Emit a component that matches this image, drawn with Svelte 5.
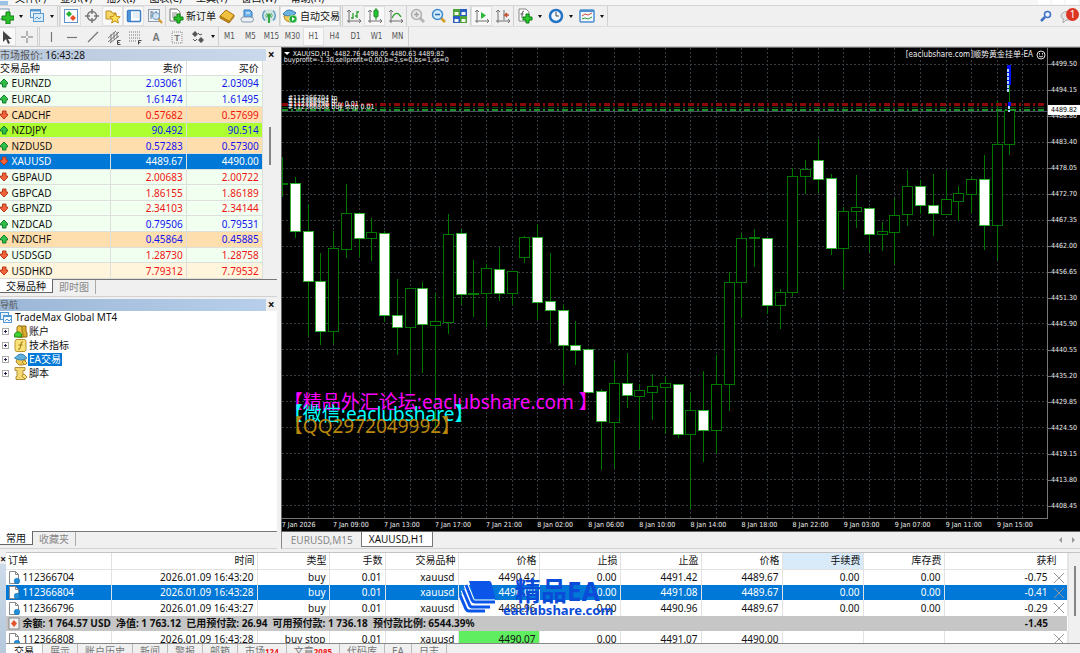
<script>
    // Inner markup of the 16x16 toolbar icons
    const icons = {
        newChart: `<rect x="1" y="1" width="10" height="10" fill="#fff" stroke="#7a94ad"/><path d="M8 4h4v4h4v4h-4v4H8v-4H4V8h4z" fill="#2cc22c" stroke="#0b7d12"/>`,
        profiles: `<rect x="1.500" y="1.500" width="10" height="8" fill="#e8f3fc" stroke="#5b9bd0"/><path d="M1 2.500h11" stroke="#5b9bd0" stroke-width="2"/><rect x="4.500" y="5.500" width="10" height="8" fill="#d7eafa" stroke="#5b9bd0"/><path d="M6 11l2-2 2 2 2-2" fill="none" stroke="#5b9bd0"/>`,
        market: `<rect x="1.500" y="1.500" width="13" height="13" fill="#fff" stroke="#5d93c8"/><path d="M6 3l3 3-3 3-3-3z" fill="#25b032"/><path d="M10 7l3 3-3 3-3-3z" fill="#e5532c"/>`,
        target: `<circle cx="8" cy="8" r="4.500" fill="none" stroke="#777" stroke-width="1.500"/><path d="M8 1v5M8 10v5M1 8h5M10 8h5" stroke="#777" stroke-width="1.500"/>`,
        navigator: `<path d="M1 3h5l1 2h4v6H1z" fill="#f5d667" stroke="#b9902a"/><path d="M10 5l1.600 3.400 3.600.4-2.700 2.500.8 3.700L10 13l-3.300 2 .8-3.700L4.800 8.800l3.600-.4z" fill="#ffdf57" stroke="#c28d16"/>`,
        terminal: `<rect x="1.500" y="2.500" width="13" height="11" rx="1" fill="#fff" stroke="#3d7ec2" stroke-width="1.500"/><rect x="2" y="3" width="3" height="10" fill="#4d93da"/><path d="M7 5h6M7 7h6M7 9h6" stroke="#ccdcec"/>`,
        tester: `<rect x="1.500" y="1.500" width="11" height="12" fill="#eef4fa" stroke="#8c9cae"/><path d="M4 3v8M4 4h2v4H4M9 3v6" stroke="#6b7f93" fill="none"/><circle cx="9" cy="8" r="3.500" fill="#cfe6f8" fill-opacity=".8" stroke="#6895bf"/><path d="M11.500 11l3.500 4" stroke="#d09a2c" stroke-width="2"/>`,
        order: `<path d="M2 1h7l3 3v9H2z" fill="#fff" stroke="#777"/><path d="M4 5h5M4 7h6M4 9h4" stroke="#888"/><path d="M9 6h3v3h3v3h-3v3H9v-3H6V9h3z" fill="#2cc22c" stroke="#0b7d12"/>`,
        book: `<path d="M1 8l6-6 8 5-5 7z" fill="#efc13e" stroke="#a87415"/><path d="M1 8v2l9 5v-2zM10 15l5-6V7" fill="#c98e1e" stroke="#a87415"/>`,
        mql: `<path d="M4 2h6l2 2v5H4z" fill="#6fb4ec" stroke="#2f78ba"/><path d="M3 9h8a2.500 2.500 0 010 5H4a2.500 2.500 0 01-1-5z" fill="#e9eef3" stroke="#8a9bac"/><path d="M6 5h4" stroke="#fff"/>`,
        signal: `<circle cx="8" cy="7.500" r="6.500" fill="#d3e6dd"/><path d="M4 2.500a6.500 6.500 0 000 10M12 2.500a6.500 6.500 0 010 10" fill="none" stroke="#5a9cc6" stroke-width="1.500"/><path d="M6 5a3.500 3.500 0 000 5M10 5a3.500 3.500 0 010 5" fill="none" stroke="#5db08e"/><circle cx="8" cy="7.500" r="2" fill="#35a545"/><path d="M8 8v7" stroke="#35a545" stroke-width="2"/>`,
        auto: `<path d="M2 8c0 7 10 8 12 2l-2-4H3z" fill="#f0cb50" stroke="#a8822a"/><path d="M1 6c1-1 3-4 6-4s6 2 7 3c-2 3-11 4-13 1z" fill="#6bb3e1" stroke="#3b7fae"/><circle cx="11" cy="11" r="4" fill="#22ac38" stroke="#fff" stroke-width=".5"/><path d="M10 9l3 2-3 2z" fill="#fff"/>`,
        bars: `<path d="M3 2v13M1 13h14M1 4l2-2 2 2M13 11l2 2-2 2" fill="none" stroke="#707070"/><path d="M7 5v6M7 10H5M11 3v7M11 4h2M11 8H9" stroke="#2aa12a" stroke-width="1.300"/>`,
        candles: `<path d="M3 2v13M1 13h14M1 4l2-2 2 2M13 11l2 2-2 2" fill="none" stroke="#707070"/><path d="M9 0v12" stroke="#138a1b"/><rect x="7" y="2" width="4" height="7" rx="1" fill="#25c435" stroke="#138a1b"/>`,
        line: `<path d="M3 2v13M1 13h14M1 4l2-2 2 2M13 11l2 2-2 2" fill="none" stroke="#707070"/><path d="M4 10c3-6 6-6 9-1" fill="none" stroke="#2aa12a" stroke-width="1.300"/>`,
        zoomIn: `<path d="M10 10l4 4" stroke="#b5b5b5" stroke-width="3"/><circle cx="6.500" cy="6.500" r="5" fill="#e8e8e8" stroke="#b0b0b0" stroke-width="1.500"/><path d="M4 6.500h5M6.500 4v5" stroke="#a5a5a5" stroke-width="1.500"/>`,
        zoomOut: `<path d="M10 10l4 4" stroke="#d6a02e" stroke-width="3"/><circle cx="6.500" cy="6.500" r="5" fill="#d4ecfd" stroke="#3f8bd0" stroke-width="1.500"/><path d="M4 6.500h5" stroke="#2a6bb0" stroke-width="1.500"/>`,
        tile: `<rect x="1" y="1" width="7" height="7" fill="#4da339"/><rect x="8" y="1" width="7" height="7" fill="#2b5bc5"/><rect x="1" y="8" width="7" height="7" fill="#2b5bc5"/><rect x="8" y="8" width="7" height="7" fill="#4da339"/><path d="M2.500 4h4v3h-4zM9.500 4h4v3h-4zM2.500 11h4v3h-4zM9.500 11h4v3h-4z" fill="#f4f8ee"/>`,
        scroll: `<path d="M3 2v13M1 13h14M1 4l2-2 2 2M13 11l2 2-2 2" fill="none" stroke="#707070"/><path d="M7 4l5 3.500L7 11z" fill="#2bb83a"/>`,
        shift: `<path d="M3 2v13M1 13h14M1 4l2-2 2 2M13 11l2 2-2 2M9 2v10" fill="none" stroke="#707070"/><path d="M14 7h-4l2-2m-2 2l2 2" fill="none" stroke="#c3502e" stroke-width="1.500"/>`,
        indicators: `<path d="M2 1h7l3 3v9H2z" fill="#fff" stroke="#888"/><path d="M7 3q-2 0-2 3v4M3.500 6h3" fill="none" stroke="#555"/><path d="M9 6h3v3h3v3h-3v3H9v-3H6V9h3z" fill="#2ccb2c" stroke="#0b7d12"/>`,
        clock: `<circle cx="8" cy="8" r="6" fill="#f4f9ff" stroke="#2574c4" stroke-width="2.500"/><path d="M8 4v4h3" fill="none" stroke="#444"/>`,
        template: `<rect x="1" y="2" width="14" height="12" rx="1" fill="#f4f8fc" stroke="#4c8fcf" stroke-width="1.500"/><path d="M1 3h14" stroke="#4c8fcf" stroke-width="2"/><path d="M3 8l3-2 3 1 4-2" fill="none" stroke="#c84f3a"/><path d="M3 11l3-1 3 1 4-2" fill="none" stroke="#2f9a35"/>`,
        cursor: `<path d="M5 2v11l3-3 2 5 2-1-2-4h4z" fill="#444"/>`,
        cross: `<path d="M8 2v5M8 9v5M2 8h5M9 8h5" stroke="#777"/>`,
        vline: `<path d="M8.500 3v10" stroke="#777" stroke-width="1.200"/>`,
        hline: `<path d="M3 8.500h10" stroke="#777" stroke-width="1.200"/>`,
        trend: `<path d="M3 13L13 3" stroke="#777" stroke-width="1.200"/>`,
        channel: `<path d="M2 9l8-7M2 13L13 3M4 14l9-7M5 5v8M8 3v7M11 3v6" stroke="#777"/><path d="M14.500 11.500h-3v4h3M11.500 13.500h2" fill="none" stroke="#444"/>`,
        fibo: `<path d="M2 3h12M2 6h12M2 9h12M2 12h8" stroke="#777" stroke-dasharray="1 1"/><path d="M14.500 11.500h-3v4M11.500 13.500h2" fill="none" stroke="#444"/>`,
        text: `<text x="8" y="12" font-size="10" font-weight="bold" text-anchor="middle" fill="#777" font-family="Liberation Sans, sans-serif">A</text>`,
        label: `<rect x="3" y="3" width="10" height="11" fill="none" stroke="#888" stroke-dasharray="1 1"/><text x="8" y="12" font-size="9" font-weight="bold" text-anchor="middle" fill="#777" font-family="Liberation Sans, sans-serif">T</text>`,
        arrows: `<path d="M5 2l3 3-3 3-3-3zM11 8l3 3-3 3-3-3z" fill="#555"/><path d="M3 10l2 2 2-2M8 4l2 2 2-1" fill="none" stroke="#555"/>`,
    };

    const menus = ["文件(F)", "显示(V)", "插入(I)", "图表(C)", "工具(T)", "窗口(W)", "帮助(H)"];

    const mainTools = [
        { icon: "newChart", label: "新图表", drop: true },
        { icon: "profiles", label: "配置文件", drop: true },
        { grip: true },
        { icon: "market", label: "市场报价", on: true },
        { icon: "target", label: "数据窗口" },
        { icon: "navigator", label: "导航", on: true },
        { icon: "terminal", label: "终端", on: true },
        { icon: "tester", label: "策略测试" },
        { line: true },
        { icon: "order", text: "新订单" },
        { icon: "book", label: "MetaEditor" },
        { icon: "mql", label: "MQL" },
        { icon: "signal", label: "信号" },
        { line: true },
        { icon: "auto", text: "自动交易", on: true },
        { grip: true },
        { icon: "bars", label: "柱状图" },
        { icon: "candles", label: "阴阳烛", on: true },
        { icon: "line", label: "折线图" },
        { line: true },
        { icon: "zoomIn", label: "放大" },
        { icon: "zoomOut", label: "缩小" },
        { icon: "tile", label: "平铺窗口" },
        { line: true },
        { icon: "scroll", label: "自动滚动", on: true },
        { icon: "shift", label: "图表平移" },
        { line: true },
        { icon: "indicators", label: "技术指标", drop: true },
        { icon: "clock", label: "时间周期", drop: true },
        { icon: "template", label: "模板", drop: true },
        { line: true },
    ];

    const drawTools = [
        { icon: "cursor", label: "光标", on: true },
        { icon: "cross", label: "十字准线" },
        { grip: true },
        { icon: "vline", label: "垂直线" },
        { icon: "hline", label: "水平线" },
        { icon: "trend", label: "趋势线" },
        { icon: "channel", label: "通道" },
        { icon: "fibo", label: "斐波那契" },
        { icon: "text", label: "文字" },
        { icon: "label", label: "文字标签" },
        { icon: "arrows", label: "箭头", drop: true },
        { line: true },
    ];

    const periods = ["M1", "M5", "M15", "M30", "H1", "H4", "D1", "W1", "MN"];
    let period = "H1";

    const quotes = [
        ["EURNZD", "2.03061", "2.03094", "up", "mint"],
        ["EURCAD", "1.61474", "1.61495", "up", "mint"],
        ["CADCHF", "0.57682", "0.57699", "down", "sand"],
        ["NZDJPY", "90.492", "90.514", "up", "lime"],
        ["NZDUSD", "0.57283", "0.57300", "up", "sand"],
        ["XAUUSD", "4489.67", "4490.00", "down", "selected"],
        ["GBPAUD", "2.00683", "2.00722", "down", "mint"],
        ["GBPCAD", "1.86155", "1.86189", "down", "mint"],
        ["GBPNZD", "2.34103", "2.34144", "down", "mint"],
        ["NZDCAD", "0.79506", "0.79531", "up", "mint"],
        ["NZDCHF", "0.45864", "0.45885", "up", "sand"],
        ["USDSGD", "1.28730", "1.28758", "down", "mint"],
        ["USDHKD", "7.79312", "7.79532", "down", "cream"],
    ];

    const tree = [
        { text: "账户", icon: "account" },
        { text: "技术指标", icon: "indicator" },
        { text: "EA交易", icon: "expert", selected: true },
        { text: "脚本", icon: "script" },
    ];

    // high, body top, body bottom, low, bearish
    const candles = [
        [109, 136, 136, 149, 0], [129, 136, 184, 190, 1], [156, 184, 234, 288, 1], [205, 234, 284, 297, 1],
        [183, 201, 284, 296, 0], [136, 166, 202, 210, 0], [165, 166, 191, 209, 1], [170, 185, 191, 213, 0],
        [183, 186, 268, 274, 1], [231, 268, 280, 307, 1], [240, 241, 280, 346, 0], [234, 241, 277, 325, 1],
        [245, 274, 278, 384, 0], [166, 187, 275, 286, 0], [181, 186, 247, 257, 1], [212, 246, 246, 269, 0],
        [216, 221, 246, 279, 0], [199, 222, 246, 253, 1], [224, 224, 246, 257, 0], [188, 190, 210, 215, 0],
        [176, 190, 255, 272, 1], [205, 254, 263, 295, 1], [257, 263, 298, 336, 1], [273, 298, 303, 317, 1],
        [302, 302, 345, 345, 1], [341, 344, 374, 422, 1], [314, 336, 375, 420, 0], [305, 336, 348, 360, 1],
        [336, 343, 349, 401, 0], [326, 339, 345, 372, 0], [328, 336, 340, 386, 0], [337, 337, 387, 390, 1],
        [345, 363, 387, 461, 0], [323, 363, 383, 414, 1], [307, 337, 383, 406, 0], [224, 235, 337, 363, 0],
        [185, 191, 235, 270, 0], [181, 190, 190, 219, 0], [191, 191, 258, 266, 1], [241, 245, 258, 281, 0],
        [120, 129, 245, 248, 0], [112, 122, 129, 146, 0], [91, 113, 132, 145, 1], [126, 131, 201, 207, 1],
        [159, 164, 201, 241, 0], [127, 160, 164, 180, 0], [159, 161, 187, 204, 1], [174, 184, 187, 203, 0],
        [150, 168, 185, 216, 0], [122, 139, 167, 178, 0], [132, 139, 158, 166, 1], [126, 158, 166, 188, 1],
        [122, 152, 167, 167, 0], [138, 146, 154, 173, 0], [129, 132, 147, 165, 0], [107, 132, 178, 202, 1],
        [53, 97, 178, 212, 0], [18, 63, 97, 107, 0],
    ];
    const candleX = (i) => Math.round(i * 12.76);
    const gridX = Array.from({ length: 30 }, (_, i) => Math.round(25.52 * (i + 1)));
    const gridY = Array.from({ length: 18 }, (_, i) => Math.round(16 + 25.94 * i));

    const prices = [
        "4499.50", "4494.15", "4488.80", "4483.40", "4478.05", "4472.70", "4467.35", "4462.00", "4456.65",
        "4451.30", "4445.90", "4440.55", "4435.20", "4429.85", "4424.50", "4419.15", "4413.80", "4408.45",
    ];
    const times = [
        "7 Jan 2026", "7 Jan 09:00", "7 Jan 13:00", "7 Jan 17:00", "7 Jan 21:00", "8 Jan 02:00", "8 Jan 06:00",
        "8 Jan 10:00", "8 Jan 14:00", "8 Jan 18:00", "8 Jan 22:00", "9 Jan 03:00", "9 Jan 07:00", "9 Jan 11:00", "9 Jan 15:00",
    ];

    const columns = [
        ["订单", 105], ["时间", 146], ["类型", 72], ["手数", 56], ["交易品种", 73], ["价格", 81],
        ["止损", 81], ["止盈", 81], ["价格", 81], ["手续费", 81], ["库存费", 81], ["获利", 123],
    ];
    const orders = [
        ["112366704", "2026.01.09 16:43:20", "buy", "0.01", "xauusd", "4490.42", "0.00", "4491.42", "4489.67", "0.00", "0.00", "-0.75"],
        ["112366804", "2026.01.09 16:43:28", "buy", "0.01", "xauusd", "4490.08", "0.00", "4491.08", "4489.67", "0.00", "0.00", "-0.41"],
        ["112366796", "2026.01.09 16:43:27", "buy", "0.01", "xauusd", "4489.96", "0.00", "4490.96", "4489.67", "0.00", "0.00", "-0.29"],
    ];
    const pending = ["112366808", "2026.01.09 16:43:28", "buy stop", "0.01", "xauusd", "4490.07", "0.00", "4491.07", "4490.00", "", "", ""];
    let selectedOrder = "112366804";

    const terminalTabs = [
        ["交易"], ["展示"], ["账户历史"], ["新闻"], ["警报"], ["邮箱"], ["市场", "124"], ["文章", "2085"], ["代码库"], ["EA"], ["日志"],
    ];
</script>

{#snippet toolList(tools)}
    {#each tools as tool}
        {#if tool.grip}
            <span class="grip"></span>
        {:else if tool.line}
            <span class="divider"></span>
        {:else}
            <button class="tool" class:on={tool.on} class:wide={tool.text} aria-label={tool.text || tool.label}>
                <svg width="16" height="16" viewBox="0 0 16 16">{@html icons[tool.icon]}</svg>
                {#if tool.text}<span>{tool.text}</span>{/if}
            </button>
            {#if tool.drop}
                <button class="drop" aria-label="{tool.label}菜单"></button>
            {/if}
        {/if}
    {/each}
{/snippet}

{#snippet orderRow(cells, isPending)}
    <tr class:selected={cells[0] === selectedOrder} on:click={() => (selectedOrder = cells[0])}>
        {#each cells as cell, i}
            <td class:pending={isPending && i === 5} class:last={i === 11}>
                {#if i === 0}
                    <svg width="12" height="13" viewBox="0 0 12 13">
                        <path d="M1.500 .5h6l3 3v9h-9z" fill="#fff" stroke="#888" />
                        <path d="M7.500 .5v3h3" fill="none" stroke="#888" />
                        <circle cx="9" cy="10" r="2.800" fill="#1f8fdc" stroke="#0f65a5" stroke-width=".5" />
                    </svg>
                {/if}
                {cell}
                {#if i === 11}
                    <button class="close-order" aria-label="平仓">
                        <svg width="12" height="12" viewBox="0 0 12 12"><path d="M1 1l10 10M11 1L1 11" stroke="#999" /></svg>
                    </button>
                {/if}
            </td>
        {/each}
    </tr>
{/snippet}

<div class="terminal-app">
    <nav class="menubar">
        <span class="app-icon"></span>
        {#each menus as menu}
            <button>{menu}</button>
        {/each}
        <span class="spacer"></span>
        <i></i><i></i><i></i>
    </nav>

    <div class="toolbar main-tools">
        {@render toolList(mainTools)}
        <span class="spacer"></span>
        <button class="search" aria-label="搜索">
            <svg width="12" height="12" viewBox="0 0 12 12">
                <path d="M1 11l4-4" stroke="#3d6fc4" stroke-width="2.500" />
                <circle cx="7.500" cy="4.500" r="3" fill="#edf4ff" stroke="#3d6fc4" stroke-width="1.500" />
            </svg>
        </button>
        <button class="chat" aria-label="消息">
            <svg width="16" height="16" viewBox="0 0 16 16">
                <path d="M1 8a6 4.500 0 1112 0 6 4.500 0 01-7 4l-3 3 .5-4Q1 10 1 8z" fill="#e3e3e3" stroke="#aaa" />
            </svg>
            <b>1</b>
        </button>
    </div>

    <div class="toolbar draw-tools">
        {@render toolList(drawTools)}
        {#each periods as p}
            <button class="tool period" class:on={p === period} on:click={() => (period = p)}>{p}</button>
        {/each}
        <span class="divider"></span>
    </div>

    <div class="workspace">
        <aside>
            <section class="market">
                <header>
                    <h2>市场报价: <span>16:43:28</span></h2>
                    <button aria-label="关闭市场报价">×</button>
                </header>
                <div class="quotes">
                    <table>
                        <thead>
                            <tr><th>交易品种</th><th>卖价</th><th>买价</th></tr>
                        </thead>
                        <tbody>
                            {#each quotes as [symbol, bid, ask, dir, tone]}
                                <tr class="{tone} {dir}">
                                    <td>
                                        <svg width="9" height="10" viewBox="0 0 9 10">
                                            {#if dir === "up"}
                                                <path d="M4 1l3.500 3.500v1.500H6v3H2.500V6H.5V4.500z" fill="#2fc04a" stroke="#147a2b" />
                                            {:else}
                                                <path d="M4 9l3.500-3.500V4H6V1H2.500v3H.5v1.500z" fill="#f0643c" stroke="#b5361a" />
                                            {/if}
                                        </svg>
                                        {symbol}
                                    </td>
                                    <td>{bid}</td>
                                    <td>{ask}</td>
                                </tr>
                            {/each}
                        </tbody>
                    </table>
                    <div class="scroll"><span></span></div>
                </div>
                <div class="tabs">
                    <button class="active">交易品种</button>
                    <button>即时图</button>
                </div>
            </section>

            <section class="navigator">
                <header>
                    <h2>导航</h2>
                    <button aria-label="关闭导航">×</button>
                </header>
                <ul>
                    <li class="root">
                        <svg width="13" height="13" viewBox="0 0 13 13">
                            <rect x=".5" y="1.500" width="8" height="7" fill="#e5f2fc" stroke="#4e97d2" />
                            <rect x="3.500" y="4.500" width="8" height="7" fill="#f3f9fe" stroke="#4e97d2" />
                            <path d="M3 5.500h9M5 10l2-2 2 2 2-2" fill="none" stroke="#4e97d2" />
                        </svg>
                        <span>TradeMax Global MT4</span>
                    </li>
                    {#each tree as node}
                        <li>
                            <button class="expand" aria-label="展开{node.text}">
                                <svg width="7" height="7" viewBox="0 0 7 7">
                                    <rect x=".5" y=".5" width="6" height="6" fill="#fff" stroke="#aaa" />
                                    <path d="M2 3.500h3M3.500 2v3" stroke="#225" />
                                </svg>
                            </button>
                            <svg width="14" height="13" viewBox="0 0 14 13">
                                {#if node.icon === "account"}
                                    <path d="M5 12V7l1-1V1h6v5l1 2v4z" fill="#d9ab2c" stroke="#967014" />
                                    <path d="M3 7V2l2-1.500L8 2v5l1 1v4H3z" fill="#efc84a" stroke="#967014" />
                                    <path d="M.5 12V9l2-2h3l2 2v3z" fill="#3ed02e" stroke="#2e8b20" />
                                {:else if node.icon === "indicator"}
                                    <rect x="1" y=".5" width="11" height="12" rx="2" fill="#fae27a" stroke="#b8962d" />
                                    <path d="M9 3q-2-1-2 2l-1 4q0 2-2 1M4.500 6h4" fill="none" stroke="#a37a10" />
                                {:else if node.icon === "expert"}
                                    <path d="M3 6h8l1 4-3 2H5L2 9z" fill="#eec951" stroke="#ad8b2b" />
                                    <path d="M.5 5Q3 3 4 2q3-2 6 0l3 3q-6 4-12.500 0z" fill="#63b0dd" stroke="#3787b5" />
                                    <path d="M10 7l3 3-2 2-3-3z" fill="#f7d65f" stroke="#ad8b2b" />
                                {:else}
                                    <path d="M1 .5h10v3H9v6h2v3H2v-3h1v-6H1z" fill="#f5d772" stroke="#b0903a" />
                                    <path d="M10 7l3 3-2 2-3-3z" fill="#ffe37c" stroke="#ad8b2b" />
                                {/if}
                            </svg>
                            <span class:picked={node.selected}>{node.text}</span>
                        </li>
                    {/each}
                </ul>
                <div class="tabs">
                    <button class="active">常用</button>
                    <button>收藏夹</button>
                </div>
            </section>
        </aside>

        <main>
            <div class="chart">
                <div class="plot">
                    <svg viewBox="0 0 765 470" preserveAspectRatio="none" shape-rendering="crispEdges">
                        {#each gridX as x}
                            <line x1={x + 0.5} x2={x + 0.5} y1="0" y2="470" class="grid" />
                        {/each}
                        {#each gridY as y}
                            <line x1="0" x2="765" y1={y + 0.5} y2={y + 0.5} class="grid" />
                        {/each}
                        <line x1="0" x2="765" y1="63.5" y2="63.5" stroke="#48525a" />
                        {#each candles as [high, top, bottom, low, bear], i}
                            <line x1={candleX(i) + 0.5} x2={candleX(i) + 0.5} y1={high} y2={low} class="wick" />
                            <rect
                                x={candleX(i) - 4.5}
                                y={top - 0.5}
                                width="10"
                                height={Math.max(bottom - top, 1)}
                                class={bear ? "bear" : "bull"}
                            />
                        {/each}
                        <line x1="0" x2="765" y1="56.5" y2="56.5" class="level take" />
                        <line x1="0" x2="765" y1="59.5" y2="59.5" class="level thin" />
                        <line x1="0" x2="765" y1="62" y2="62" class="level open" />
                        <path d="M725 17h4v20h-2v7h-2zM726 54h3v4h-3z" fill="#0010f5" />
                        <path d="M726 21v23M726.500 58v6" stroke="#a8d4ff" stroke-width="2" stroke-dasharray="3 1" />
                    </svg>
                    <p class="symbol">XAUUSD,H1&nbsp; 4482.76 4498.05 4480.63 4489.82</p>
                    <p class="profit">buyprofit=-1.30,sellprofit=0.00,b=3,s=0,bs=1,ss=0</p>
                    <p class="expert">[eaclubshare.com]顺势黄金挂单-EA
                        <svg width="10" height="10" viewBox="0 0 10 10">
                            <circle cx="5" cy="5" r="4" fill="none" stroke="#ddd" />
                            <path d="M3 6q2 2 4 0M3.500 3v1.500M6.500 3v1.500" fill="none" stroke="#ddd" />
                        </svg>
                    </p>
                    <div class="levels">
                        <p>#112366704 tp</p>
                        <p>#112366804 tp</p>
                        <p>#112366796 buy 0.01</p>
                        <p>#112366808 buy stop 0.01</p>
                    </div>
                    <div class="promo">
                        <p>【精品外汇论坛:eaclubshare.com 】</p>
                        <p>【微信:eaclubshare】</p>
                        <p>【QQ2972049992】</p>
                    </div>
                </div>
                <div class="prices">
                    {#each prices as price}<span>{price}</span>{/each}
                    <b>4489.82</b>
                </div>
                <div class="times">
                    {#each times as time}<span>{time}</span>{/each}
                </div>
            </div>
            <div class="chart-tabs">
                <button>EURUSD,M15</button>
                <button class="active">XAUUSD,H1</button>
                <span class="spacer"></span>
                <button class="arrow left" aria-label="上一个"></button>
                <button class="arrow right" aria-label="下一个"></button>
            </div>
        </main>
    </div>

    <section class="trades">
        <div class="side"><button aria-label="关闭终端">×</button><span></span></div>
        <div class="trade-body">
            <div class="rows">
                <table>
                    <colgroup>
                        {#each columns as [, width]}<col style="width: {width}px" />{/each}
                    </colgroup>
                    <thead>
                        <tr>
                            {#each columns as [name], i}<th class:sorted={i === 9}>{name}</th>{/each}
                        </tr>
                    </thead>
                    <tbody>
                        {#each orders as order}
                            {@render orderRow(order, false)}
                        {/each}
                        <tr class="balance">
                            <td colspan="11">
                                <svg width="12" height="13" viewBox="0 0 12 13">
                                    <rect x="1" y="1" width="10" height="11" fill="#f3f3f3" stroke="#888" />
                                    <path d="M6 3l3 3.500L6 10 3 6.500z" fill="#e3532c" />
                                </svg>
                                余额: 1 764.57 USD&nbsp; 净值: 1 763.12&nbsp; 已用预付款: 26.94&nbsp; 可用预付款: 1 736.18&nbsp; 预付款比例: 6544.39%
                            </td>
                            <td class="last">-1.45</td>
                        </tr>
                        {@render orderRow(pending, true)}
                    </tbody>
                </table>
                <div class="scroll"><span></span></div>
                <div class="brand">
                    <svg width="38" height="34" viewBox="0 0 38 34">
                        <path d="M10 1h20q2 0 2.500 2l4 16H18q-2 0-3-2z" fill="#0b56e8" />
                        <path d="M7 5l6 15q1 2 3 2h20M4 10l6 14q1 3 3 3h18M1 15l6 14q1 2 3 2h16" fill="none" stroke="#fff" stroke-width="5" />
                        <path d="M7 5l6 15q1 2 3 2h20M4 10l6 14q1 3 3 3h18M1 15l6 14q1 2 3 2h16" fill="none" stroke="#0b56e8" stroke-width="3" />
                    </svg>
                    <div>
                        <strong>精品EA</strong>
                        <em>eaclubshare.com</em>
                    </div>
                </div>
            </div>
            <div class="trade-tabs">
                {#each terminalTabs as [name, count], i}
                    <button class:active={i === 0}>{name}{#if count}<b>{count}</b>{/if}</button>
                {/each}
            </div>
        </div>
    </section>
</div>

<style>
    :global(body) {
        background: #f0f0f0;
    }

    .terminal-app {
        display: flex;
        flex-direction: column;
        height: 100vh;
        overflow: hidden;
        background: #f0f0f0;
        color: #111;
        font: 10px/14px "Noto Sans", "Noto Sans CJK SC", sans-serif;
    }

    button {
        padding: 0;
        border: 0;
        background: none;
        color: inherit;
        font: inherit;
        white-space: nowrap;
    }

    h2,
    p,
    ul {
        margin: 0;
        padding: 0;
    }

    svg {
        flex: none;
    }

    table {
        border-collapse: collapse;
        table-layout: fixed;
    }

    .spacer {
        flex: 1;
    }

    /* Menu and toolbars */
    .menubar {
        display: flex;
        align-items: flex-end;
        gap: 14px;
        height: 5px;
        padding-right: 2px;
        overflow: hidden;
        border-bottom: 1px solid #d5d5d5;
        background: #f6f6f6;
    }

    .menubar .app-icon {
        width: 8px;
        height: 4px;
        margin-right: -14px;
        background: #9dc3e6;
    }

    .menubar .app-icon + button {
        margin-left: 7px;
    }

    .menubar i {
        width: 12px;
        height: 4px;
        margin-left: -12px;
        align-self: flex-start;
        background: #fff;
    }

    .toolbar {
        display: flex;
        align-items: stretch;
        height: 20px;
        border-bottom: 1px solid #dcdcdc;
    }

    .draw-tools {
        height: 19px;
        border-bottom: 1px solid #c8c8c8;
    }

    .toolbar > .tool:first-child {
        margin-left: -5px;
    }

    .tool {
        display: flex;
        align-items: center;
        justify-content: center;
        width: 21px;
    }

    .tool.wide {
        width: auto;
        gap: 2px;
        padding-left: 2px;
    }

    .tool.on {
        background: #f9f9f9;
        box-shadow: inset 0 0 0 1px #e0e0e0;
    }

    .period {
        color: #555;
        font: 8px "DejaVu Sans Condensed", "DejaVu Sans", sans-serif;
    }

    .drop {
        width: 10px;
        display: grid;
        place-items: center;
    }

    .drop::after {
        content: "";
        border: 2px solid transparent;
        border-top: 3px solid #111;
        border-bottom: 0;
    }

    .grip {
        width: 3px;
        box-sizing: border-box;
        border-left: 1px solid #d0d0d0;
        border-right: 1px solid #d0d0d0;
    }

    .divider {
        width: 1px;
        background: #d0d0d0;
    }

    .search,
    .chat {
        display: flex;
        align-items: center;
        width: 20px;
    }

    .chat {
        position: relative;
    }

    .chat b {
        position: absolute;
        top: 2px;
        right: 1px;
        width: 13px;
        height: 13px;
        border-radius: 50%;
        background: #dc3524;
        color: #fff;
        font: 10px/13px "Noto Sans", sans-serif;
    }

    /* Left docks */
    .workspace {
        display: flex;
        flex: 1;
        min-height: 0;
    }

    aside {
        display: flex;
        flex-direction: column;
        width: 26%;
        min-width: 0;
    }

    aside section {
        display: flex;
        flex-direction: column;
        min-height: 0;
        padding-top: 2px;
        margin-right: 4px;
        border-bottom: 1px solid #d2d2d2;
    }

    .market {
        flex: 247;
    }

    .navigator {
        flex: 249;
    }

    aside header {
        display: flex;
        justify-content: space-between;
        height: 12px;
        line-height: 12px;
    }

    aside h2 {
        flex: 1;
        background: linear-gradient(90deg, #b9c9dc, #c9d8ea);
        color: #555;
        font-size: 10px;
        font-weight: normal;
    }

    aside h2 span {
        color: #111;
    }

    .navigator h2 {
        background: linear-gradient(90deg, #9bb7d6, #b7cfea);
        font-size: 9px;
    }

    aside header button {
        width: 11px;
        font-size: 12px;
        font-weight: bold;
        line-height: 12px;
    }

    .quotes {
        display: flex;
        flex: 1;
        min-height: 0;
    }

    .quotes table {
        flex: 1;
        height: 100%;
        background: #fff;
    }

    .quotes th,
    .quotes td {
        padding: 0 3px 0 0;
        border-right: 1px solid #dcdfdc;
        border-bottom: 1px solid #dcdfdc;
        font-weight: normal;
        line-height: 14px;
        text-align: right;
    }

    .quotes th:first-child,
    .quotes td:first-child {
        width: 42%;
        text-align: left;
    }

    .quotes td svg {
        vertical-align: -1px;
    }

    .up {
        color: #1414f0;
    }

    .down {
        color: #f01414;
    }

    .up td:first-child,
    .down td:first-child {
        color: #111;
    }

    .mint {
        background: #f0fff0;
    }

    .sand {
        background: #ffdead;
    }

    .lime {
        background: #adff2f;
    }

    .cream {
        background: #fff5dc;
    }

    .selected,
    .quotes .selected td {
        background: #0078d7;
        color: #fff;
    }

    .scroll {
        display: flex;
        justify-content: center;
        align-items: center;
        flex: 0 0 12px;
        background: #f0f0f0;
    }

    .scroll span {
        width: 2px;
        height: 38px;
        background: #858585;
    }

    .quotes .scroll {
        flex-basis: 14px;
    }

    .quotes .scroll span {
        margin-bottom: 48px;
    }

    .tabs {
        display: flex;
        height: 17px;
        background: linear-gradient(#777, #777) top / 100% 1px no-repeat;
    }

    .tabs button {
        height: 14px;
        padding: 0 6px;
        color: #888;
        line-height: 14px;
        margin-top: 1px;
        border-right: 1px solid #aaa;
    }

    .tabs .active {
        margin-top: 0;
        border-right: 1px solid #666;
        border-bottom: 1px solid #666;
        background: #fff;
        color: #111;
    }

    .navigator ul {
        flex: 1;
        min-height: 0;
        background: #fff;
        list-style: none;
    }

    .navigator li {
        display: flex;
        align-items: center;
        height: 14px;
        padding-left: 2px;
    }

    .navigator .root {
        gap: 1px;
        height: 13px;
        padding-left: 0;
    }

    .navigator li span {
        padding: 0 1px;
        line-height: 13px;
    }

    .expand {
        display: flex;
        margin-right: 5px;
    }

    .navigator .picked {
        background: #0078d7;
        color: #fff;
    }

    /* Chart */
    main {
        display: flex;
        flex: 1;
        flex-direction: column;
        min-width: 0;
    }

    .chart {
        display: grid;
        flex: 1;
        grid-template: minmax(0, 1fr) 12px / minmax(0, 1fr) 32px;
        min-height: 0;
        border: 1px solid #666;
        border-right: 0;
        background: #000;
        color: #eee;
        font: 7px/10px "DejaVu Sans Condensed", "DejaVu Sans", "Noto Sans CJK SC", sans-serif;
    }

    .plot {
        position: relative;
        overflow: hidden;
        border-right: 1px solid #777;
        border-bottom: 1px solid #777;
    }

    .plot > svg {
        display: block;
        width: 100%;
        height: 100%;
    }

    .grid {
        stroke: #343c44;
        stroke-dasharray: 2 2;
    }

    .level {
        stroke-dasharray: 6 3 2 3;
    }

    .take {
        stroke: #8c0606;
        stroke-width: 3;
    }

    .thin {
        stroke: #0d4d18;
    }

    .open {
        stroke: #1c8f28;
        stroke-width: 2;
    }

    .wick {
        stroke: #007800;
    }

    .bull {
        fill: #000;
        stroke: #007800;
    }

    .bear {
        fill: #fff;
        stroke: #30b030;
    }

    .plot p {
        white-space: nowrap;
    }

    .symbol,
    .profit,
    .expert,
    .levels,
    .promo {
        position: absolute;
        top: 1px;
        left: 2px;
    }

    .symbol {
        left: 11px;
    }

    .symbol::before {
        content: "";
        position: absolute;
        top: 3px;
        left: -9px;
        border: 3px solid transparent;
        border-top-color: #fff;
        border-bottom: 0;
    }

    .profit {
        top: 7px;
    }

    .expert {
        display: flex;
        align-items: center;
        gap: 3px;
        left: auto;
        right: 1px;
        top: 2px;
        font-size: 8px;
    }

    .levels {
        top: 49px;
        left: 6px;
        color: #fff;
        line-height: 3px;
    }

    .promo {
        top: 74%;
        font: 19px/12px "Noto Sans", "Noto Sans CJK SC", sans-serif;
        color: #f0f;
    }

    .promo p:nth-child(2) {
        color: #0ff;
    }

    .promo p:nth-child(3) {
        color: #b8860b;
    }

    .prices {
        position: relative;
        display: flex;
        flex-direction: column;
        padding-top: 3px;
    }

    .prices span {
        display: flex;
        flex: 1;
        align-items: center;
        min-height: 0;
        padding-left: 3px;
    }

    .prices span::before {
        content: "";
        width: 3px;
        margin-left: -3px;
        border-top: 1px solid #777;
    }

    .prices b {
        position: absolute;
        top: 12%;
        left: 0;
        right: 0;
        padding-left: 3px;
        background: #fff;
        color: #000;
        font-weight: normal;
    }

    .times {
        display: grid;
        grid-template-columns: repeat(15, 1fr);
        line-height: 12px;
        white-space: nowrap;
    }

    .chart-tabs {
        display: flex;
        height: 16px;
        border-bottom: 1px solid #d2d2d2;
        border-left: 1px solid #888;
    }

    .chart-tabs button {
        height: 15px;
        padding: 0 8px 0 9px;
        color: #888;
    }

    .chart-tabs .active {
        padding: 0 8px 0 7px;
        border: 1px solid #777;
        border-top: 0;
        background: #fff;
        color: #111;
    }

    .chart-tabs .arrow {
        padding: 0 5px;
    }

    .arrow::after {
        content: "";
        display: block;
        border: 3px solid transparent;
    }

    .arrow.left::after {
        border-right-color: #999;
        border-left: 0;
    }

    .arrow.right::after {
        border-left-color: #999;
        border-right: 0;
    }

    /* Terminal */
    .trades {
        display: flex;
        padding-top: 3px;
    }

    .side {
        display: flex;
        flex-direction: column;
        width: 6px;
        overflow: hidden;
    }

    .side button {
        width: 6px;
        height: 12px;
        font-weight: bold;
    }

    .side span {
        flex: 1;
        background: linear-gradient(#cddbea, #b6c8dc);
    }

    .trade-body {
        flex: 1;
        min-width: 0;
        border-top: 1px solid #c4c4c4;
    }

    .rows {
        position: relative;
        display: flex;
        align-items: flex-start;
        height: 90px;
        overflow: hidden;
        border-bottom: 1px solid #888;
    }

    .rows table {
        flex: 1;
        width: 100%;
        background: #fff;
    }

    .rows tr {
        height: 16px;
    }

    .rows tbody tr:nth-child(even) {
        height: 15px;
    }

    .rows th,
    .rows td {
        position: relative;
        padding: 0 3px 0 0;
        border-right: 1px solid #e2e2e2;
        font-weight: normal;
        line-height: 15px;
        text-align: right;
        white-space: nowrap;
    }

    .rows th {
        padding-right: 2px;
        border-bottom: 1px solid #e2e2e2;
    }

    .rows th:first-child,
    .rows td:first-child {
        padding-left: 2px;
        text-align: left;
    }

    .rows td svg {
        vertical-align: -3px;
    }

    .rows th:last-child {
        padding-right: 10px;
    }

    .rows .last {
        padding-right: 19px;
    }

    .rows .sorted {
        background: #d9ebf9;
    }

    .rows .pending {
        background: #5fee5f;
    }

    .rows .balance {
        background: #c6c6c6;
    }

    .rows .balance td {
        border: 0;
        font-weight: bold;
    }

    .close-order {
        position: absolute;
        top: 2px;
        right: 2px;
        height: 12px;
    }

    .close-order svg {
        display: block;
    }

    .rows .scroll {
        align-self: stretch;
        border-left: 1px solid #e5e5e5;
    }

    .rows .scroll span {
        height: 50px;
        margin-bottom: 14px;
    }

    .brand {
        position: absolute;
        top: 27px;
        left: 42%;
        display: flex;
        gap: 6px;
        padding-left: 2px;
        color: #0a4bd8;
    }

    .brand strong {
        display: block;
        padding-left: 12px;
        font-size: 26px;
        line-height: 23px;
    }

    .brand em {
        display: block;
        font-size: 13px;
        font-style: normal;
        font-weight: bold;
        line-height: 14px;
    }

    .trade-tabs {
        display: flex;
        height: 9px;
        overflow: hidden;
    }

    .trade-tabs button {
        height: 14px;
        padding: 0 7px;
        border-right: 1px solid #bbb;
        color: #777;
    }

    .trade-tabs .active {
        background: #fff;
        color: #111;
        padding: 0 8px;
    }

    .trade-tabs b {
        color: #f01414;
        font-size: 8px;
    }
</style>
